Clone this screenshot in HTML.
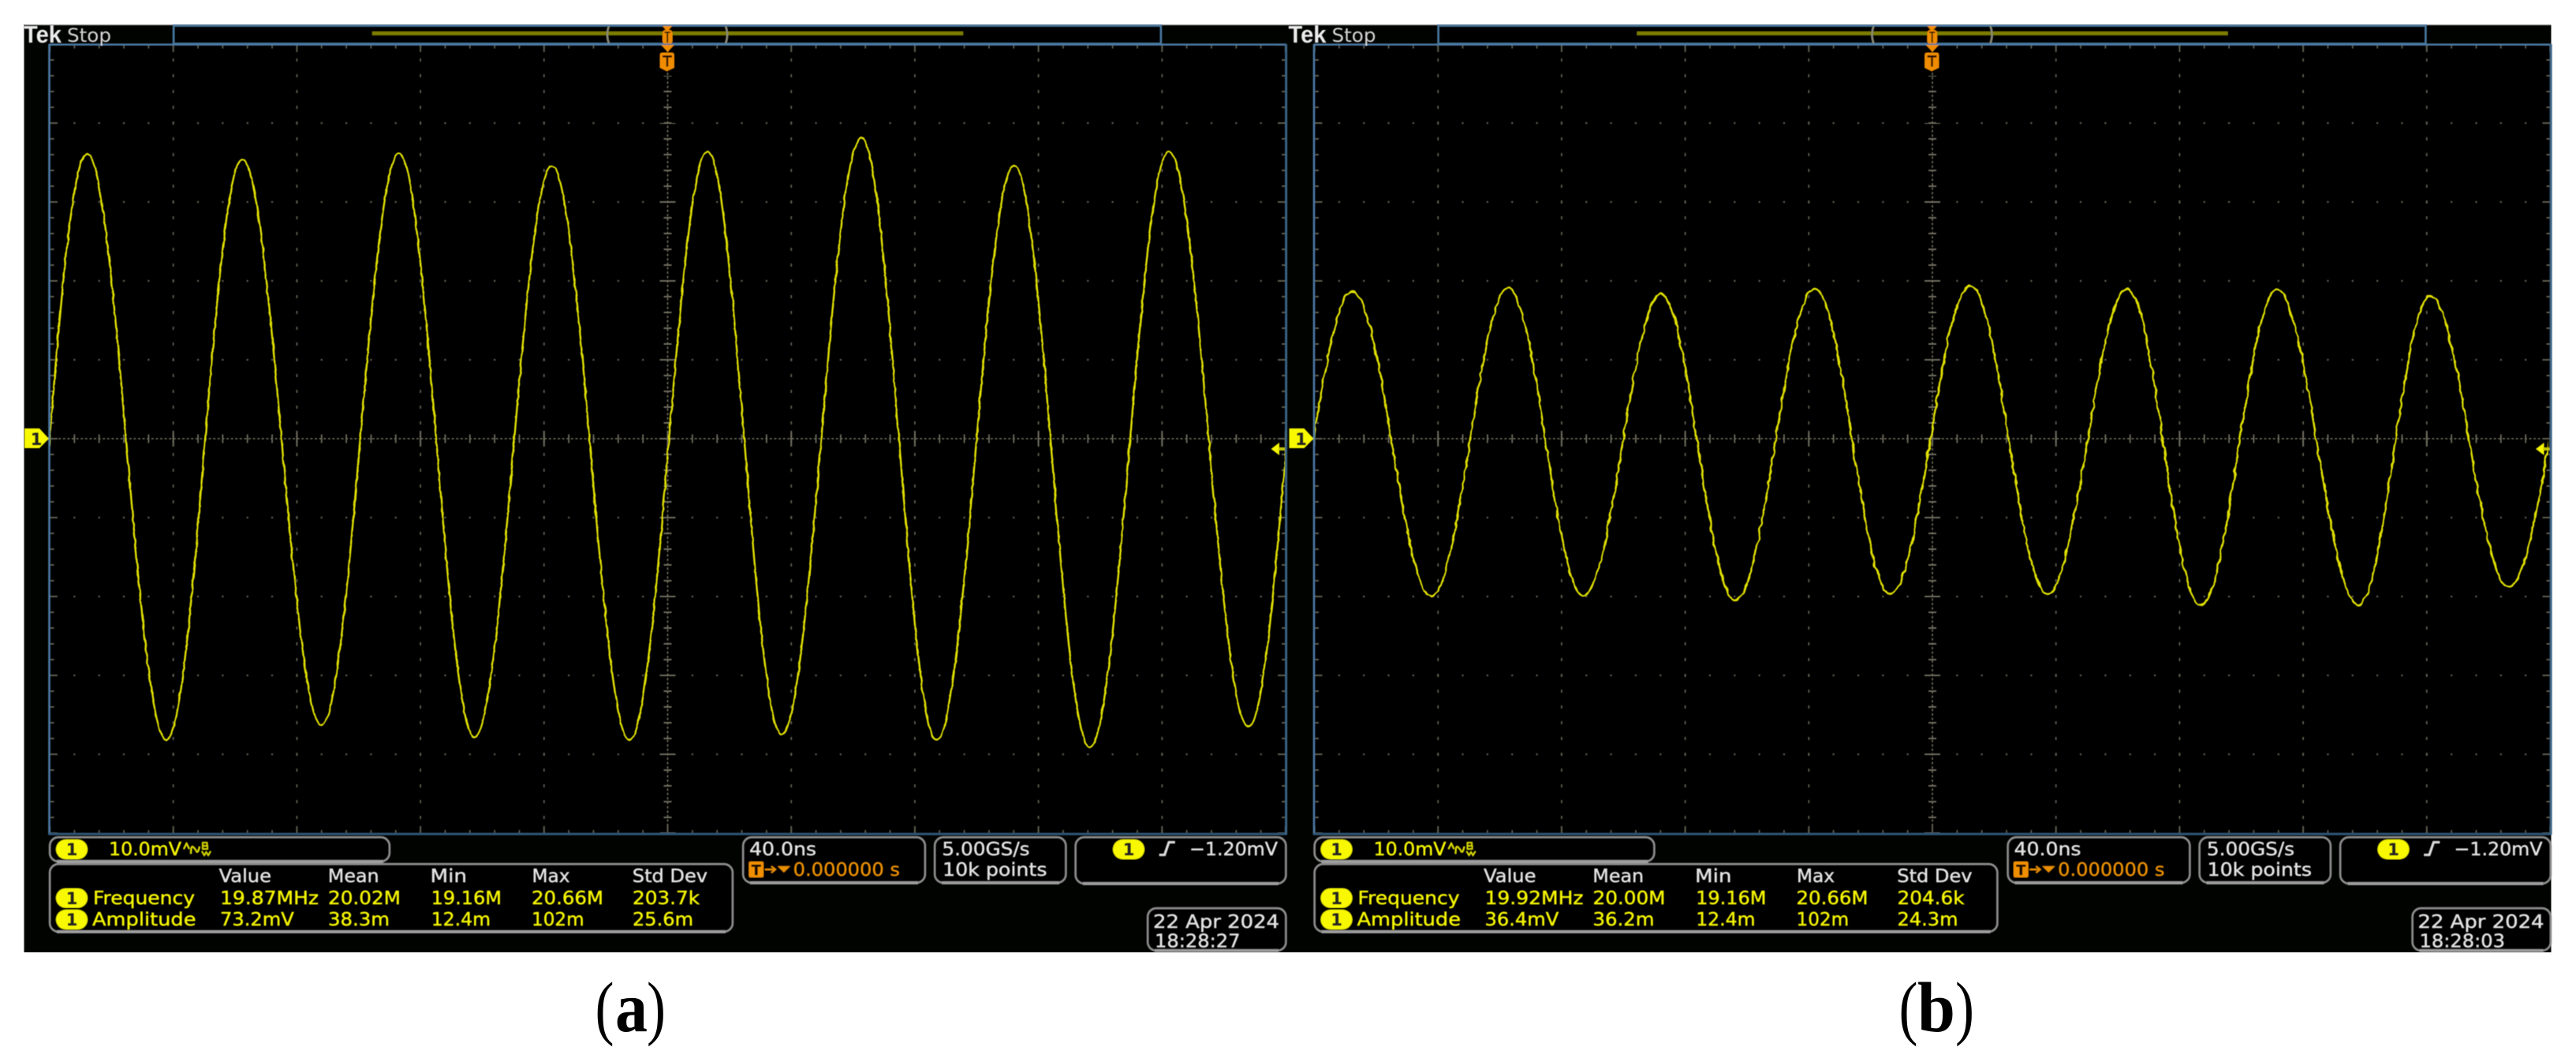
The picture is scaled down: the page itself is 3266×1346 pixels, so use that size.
<!DOCTYPE html>
<html lang="en"><head><meta charset="utf-8"><title>Oscilloscope captures</title>
<style>
html,body{margin:0;padding:0;background:#fff;width:3266px;height:1346px;overflow:hidden}
svg{display:block}
.t{font-family:"DejaVu Sans","Liberation Sans",sans-serif;font-size:23.5px;stroke-width:.45px}
.y{fill:#f4f400;stroke:#f4f400}.w{fill:#e2e2e2;stroke:#e2e2e2}.o{fill:#e88e00;stroke:#e88e00}
.b{font-family:"DejaVu Sans","Liberation Sans",sans-serif;font-size:21px;font-weight:bold;fill:#222;text-anchor:middle}
.c{font-family:"Liberation Serif",serif;font-size:90px;fill:#000}
</style></head><body>
<svg xmlns="http://www.w3.org/2000/svg" width="3266" height="1346" viewBox="0 0 3266 1346">
<defs>
<filter id="soft" filterUnits="userSpaceOnUse" x="0" y="0" width="3266" height="1346"><feGaussianBlur stdDeviation="0.6"/></filter>
<filter id="n1" filterUnits="userSpaceOnUse" x="0" y="0" width="3266" height="1346" color-interpolation-filters="sRGB">
<feTurbulence type="fractalNoise" baseFrequency="0.09" numOctaves="2" seed="4" result="r"/>
<feDisplacementMap in="SourceGraphic" in2="r" scale="3" xChannelSelector="R" yChannelSelector="G"/>
<feGaussianBlur stdDeviation="0.4"/></filter>
<filter id="n2" filterUnits="userSpaceOnUse" x="0" y="0" width="3266" height="1346" color-interpolation-filters="sRGB">
<feTurbulence type="fractalNoise" baseFrequency="0.09" numOctaves="2" seed="9" result="r"/>
<feDisplacementMap in="SourceGraphic" in2="r" scale="5" xChannelSelector="R" yChannelSelector="G"/>
<feGaussianBlur stdDeviation="0.4"/></filter>
<clipPath id="cl"><rect x="62" y="56" width="1568" height="1002"/></clipPath>
<clipPath id="cr"><rect x="1665" y="56" width="1566" height="1002"/></clipPath>

<g id="grid" fill="none" stroke="#5e5d50" filter="url(#soft)">
<path stroke-width="1.8" stroke-dasharray="4 16" stroke-dashoffset="2" d="M156.7 0V1001M313.4 0V1001M470.1 0V1001M626.8 0V1001M940.2 0V1001M1096.9 0V1001M1253.6 0V1001M1410.3 0V1001"/>
<path stroke-width="2.2" stroke-dasharray="2.2 29.14" stroke-dashoffset="1.1" d="M0 100H1567M0 200H1567M0 300H1567M0 400H1567M0 600H1567M0 700H1567M0 800H1567M0 900H1567"/>
<!-- centre cross -->
<path stroke="#74735f" stroke-width="1.6" stroke-dasharray="3 2.6" d="M0 500H1567M783.5 36V1001"/>
<path stroke="#6e6d5e" stroke-width="11" stroke-dasharray="1.8 29.54" stroke-dashoffset="0.9" d="M0 500H1567"/>
<path stroke="#6e6d5e" stroke-width="20" stroke-dasharray="2 154.7" stroke-dashoffset="1" d="M0 500H1567"/>
<path stroke="#6e6d5e" stroke-width="10" stroke-dasharray="2 18" stroke-dashoffset="1" d="M783.5 40V1001"/>
<path stroke="#6e6d5e" stroke-width="20" stroke-dasharray="2 98" stroke-dashoffset="1" d="M783.5 100V1001"/>
<!-- edge ticks -->
<path stroke-width="5" stroke-dasharray="1.8 29.54" stroke-dashoffset="0.9" d="M0 3H1567M0 998.5H1567"/>
<path stroke-width="10" stroke-dasharray="2 154.7" stroke-dashoffset="1" d="M0 5H1567M0 996H1567"/>
<path stroke-width="5" stroke-dasharray="2 18" stroke-dashoffset="1" d="M3 0V1001M1564.5 0V1001"/>
<path stroke-width="10" stroke-dasharray="2 98" stroke-dashoffset="1" d="M5 0V1001M1562 0V1001"/>
</g>

<g id="chrome">
<!-- top record bar -->
<rect x="220" y="32.5" width="1252" height="23" fill="#010301" stroke="#4c7aa3" stroke-width="2.4"/>
<rect x="472" y="40" width="749" height="4.5" fill="#7d7d00"/>
<path d="M772 33Q768 44 772 55M920 33Q924 44 920 55" fill="none" stroke="#8c8c7c" stroke-width="2.2"/>
<path d="M840 33h12l-6 7z" fill="#f08c00"/>
<rect x="840" y="38" width="12.5" height="18" rx="4" fill="#f08c00"/>
<path d="M842.5 41h7.5M846.2 41v13" stroke="#241400" stroke-width="1.8" fill="none"/>
<!-- plot frame -->
<path d="M62.5 56V1058" stroke="#4b79a6" stroke-width="2.6" fill="none"/>
<path d="M62 56.5H1631" stroke="#4c7aa3" stroke-width="2.6" fill="none"/>
<path d="M62 1057H1631" stroke="#2f5474" stroke-width="3" fill="none"/>
<path d="M1630.6 56V1058" stroke="#3a6284" stroke-width="3" fill="none"/>
<!-- trigger marker -->
<path d="M838 57h17l-8.500 9z" fill="#f08c00"/>
<path d="M836.500 70q0-3.500 3-3.500h12.500q3 0 3 3.500v16l-9.500 4.500-9-4.500z" fill="#f08c00"/>
<path d="M840 71.500h12M846 71.500v13" stroke="#201000" stroke-width="2.400" fill="none"/>
<!-- channel pointer -->
<path d="M31 543H50L62 556 50 568H31Z" fill="#f8f800"/>
<!-- right ground arrow -->
<path d="M1611.500 569l10.500-8v16z" fill="#f4f400"/>
<rect x="1621" y="567" width="8" height="4" fill="#c6c600"/>
<!-- readout boxes -->
<g fill="#010301" stroke="#8f8f8f" stroke-width="2.400">
<rect x="63" y="1061" width="431" height="31" rx="11"/>
<rect x="63" y="1095" width="866" height="86" rx="11"/>
<rect x="942" y="1061" width="231" height="58" rx="11"/>
<rect x="1185" y="1061" width="166.500" height="58" rx="11"/>
<rect x="1363.500" y="1061" width="267" height="59" rx="11"/>
<rect x="1455" y="1151" width="175.500" height="54" rx="11"/>
</g>
<path d="M72 1092H486M72 1181H920M951 1119H1164M1194 1119H1343M1373 1120H1621M1464 1205H1621" stroke="#a0a0a0" stroke-width="3.800" fill="none"/>
<g fill="#f8f800">
<rect x="71" y="1064" width="40" height="25" rx="12.500"/>
<rect x="71" y="1126" width="40" height="24.500" rx="12.200"/>
<rect x="71" y="1153" width="40" height="25" rx="12.500"/>
<rect x="1411" y="1064" width="40" height="25" rx="12.500"/>
</g>
<rect x="949.500" y="1092" width="18.500" height="20" rx="2" fill="#f09000"/>
<path d="M970 1102h12M978 1098l5 4-5 4" stroke="#e88e00" stroke-width="2" fill="none"/>
<path d="M985.700 1097.700h16.300l-8.200 8z" fill="#e88e00"/>
<path d="M1470 1083.500h6.500l5.500-16h7.500" fill="none" stroke="#e4e4e4" stroke-width="2.500"/>
<path d="M233 1076l3.500-7 3.500 7M242 1082q0-12 3.500-8t3.500 5q2 3 4-6" fill="none" stroke="#e6e600" stroke-width="1.700"/>
<path d="M257 1068h5.500v4h-5.500zM257 1072h6v4h-6zM256 1079l3 5 2.500-4 2.500 4 3-5" fill="none" stroke="#e6e600" stroke-width="1.500"/>
</g>
</defs>

<!-- panel -->
<rect x="30" y="31" width="3204.500" height="1176" fill="#010301"/>
<rect x="30" y="31" width="3204.500" height="1.300" fill="#8c8c8c"/>
<rect x="30" y="31" width="1.200" height="1176" fill="#6c6c6c"/>
<rect x="63" y="57" width="1567" height="1000" fill="#000"/>
<rect x="1666.500" y="57" width="1567" height="1000" fill="#000"/>

<!-- graticules -->
<use href="#grid" transform="translate(63 56)"/>
<use href="#grid" transform="translate(1666.500 56)"/>

<!-- waveforms -->
<g clip-path="url(#cl)"><path filter="url(#n1)" fill="none" stroke="#e2e200" stroke-width="2.400" stroke-linejoin="bevel" d="M62 566C77.600 376 92.600 195 110.400 195C147 195 174.400 938 211 938C246 938 272 202 307 202C343.600 202 371 919 407.600 919C443.400 919 470 195 505.800 195C540.700 195 566.700 934.500 601.600 934.500C637.400 934.500 664 211 699.800 211C735.600 211 762.200 938 798 938C834 938 861 192 897 192C931.200 192 956.800 931 991 931C1027.800 931 1055.200 175 1092 175C1126.800 175 1152.800 938 1187.600 938C1223.400 938 1250 210 1285.800 210C1320.700 210 1346.700 947 1381.600 947C1418.200 947 1445.400 192 1482 192C1518.800 192 1546.200 921 1583 921C1619 921 1644 190 1680 190"/></g>
<g clip-path="url(#cr)"><path filter="url(#n2)" fill="none" stroke="#e2e200" stroke-width="2.400" stroke-linejoin="bevel" d="M1665 556C1681 461 1696.500 370 1714.400 370C1751 370 1778.400 755 1815 755C1850.300 755 1876.700 365 1912 365C1946.800 365 1972.800 755 2007.600 755C2043.400 755 2070 373 2105.800 373C2140.100 373 2165.700 760 2200 760C2236.700 760 2264.100 366 2300.800 366C2335.700 366 2361.600 753 2396.500 753C2433.500 753 2461 362 2498 362C2533.700 362 2560.300 752 2596 752C2632.800 752 2660.200 366 2697 366C2730.900 366 2756.100 767 2790 767C2825.300 767 2851.700 367 2887 367C2924.500 367 2952.500 767 2990 767C3023.100 767 3047.900 375 3081 375C3117.200 375 3144.300 743 3180.500 743C3218.500 743 3247 370 3285 370"/></g>

<!-- chrome -->
<use href="#chrome" filter="url(#soft)"/>
<use href="#chrome" transform="translate(1603.500 0)" filter="url(#soft)"/>

<!-- left readouts -->
<g filter="url(#soft)">
<text x="30" y="54" font-family="Liberation Sans,sans-serif" font-size="31" font-weight="bold" fill="#ececec" textLength="48" lengthAdjust="spacingAndGlyphs">Tek</text>
<text x="85" y="53" font-family="DejaVu Sans,sans-serif" font-size="24" fill="#d4d4d4" textLength="56" lengthAdjust="spacingAndGlyphs">Stop</text>
<text x="46" y="564" class="b">1</text>
<text x="91" y="1084" class="b">1</text><text x="91" y="1146" class="b">1</text><text x="91" y="1173" class="b">1</text><text x="1431" y="1084" class="b">1</text>
<text x="958.800" y="1109" font-family="DejaVu Sans,sans-serif" font-size="18" font-weight="bold" fill="#1c1000" text-anchor="middle">T</text>
<text class="t y" x="138" y="1084" textLength="92" lengthAdjust="spacingAndGlyphs">10.0mV</text>
<text class="t w" x="277.600" y="1118" textLength="66.400" lengthAdjust="spacingAndGlyphs">Value</text>
<text class="t w" x="415.800" y="1118" textLength="64.800" lengthAdjust="spacingAndGlyphs">Mean</text>
<text class="t w" x="545.500" y="1118" textLength="46.500" lengthAdjust="spacingAndGlyphs">Min</text>
<text class="t w" x="674.500" y="1118" textLength="48" lengthAdjust="spacingAndGlyphs">Max</text>
<text class="t w" x="801.800" y="1118" textLength="95.200" lengthAdjust="spacingAndGlyphs">Std Dev</text>
<text class="t y" x="118" y="1146" textLength="129" lengthAdjust="spacingAndGlyphs">Frequency</text>
<text class="t y" x="279" y="1146" textLength="125" lengthAdjust="spacingAndGlyphs">19.87MHz</text>
<text class="t y" x="416" y="1146" textLength="92" lengthAdjust="spacingAndGlyphs">20.02M</text>
<text class="t y" x="546.700" y="1146" textLength="89.300" lengthAdjust="spacingAndGlyphs">19.16M</text>
<text class="t y" x="674" y="1146" textLength="91" lengthAdjust="spacingAndGlyphs">20.66M</text>
<text class="t y" x="802" y="1146" textLength="85" lengthAdjust="spacingAndGlyphs">203.7k</text>
<text class="t y" x="117" y="1173" textLength="131.500" lengthAdjust="spacingAndGlyphs">Amplitude</text>
<text class="t y" x="279" y="1173" textLength="93.700" lengthAdjust="spacingAndGlyphs">73.2mV</text>
<text class="t y" x="416" y="1173" textLength="78" lengthAdjust="spacingAndGlyphs">38.3m</text>
<text class="t y" x="546.700" y="1173" textLength="75.300" lengthAdjust="spacingAndGlyphs">12.4m</text>
<text class="t y" x="674" y="1173" textLength="66.600" lengthAdjust="spacingAndGlyphs">102m</text>
<text class="t y" x="802" y="1173" textLength="77" lengthAdjust="spacingAndGlyphs">25.6m</text>
<text class="t w" x="950" y="1084" textLength="85" lengthAdjust="spacingAndGlyphs">40.0ns</text>
<text class="t o" x="1005.600" y="1110" textLength="135.400" lengthAdjust="spacingAndGlyphs">0.000000 s</text>
<text class="t w" x="1194.400" y="1084" textLength="111.200" lengthAdjust="spacingAndGlyphs">5.00GS/s</text>
<text class="t w" x="1195" y="1110" textLength="132.500" lengthAdjust="spacingAndGlyphs">10k points</text>
<text class="t w" x="1508" y="1084" textLength="112" lengthAdjust="spacingAndGlyphs">−1.20mV</text>
<text class="t w" x="1462" y="1176" textLength="160" lengthAdjust="spacingAndGlyphs">22 Apr 2024</text>
<text class="t w" x="1464" y="1200.500" textLength="108.500" lengthAdjust="spacingAndGlyphs">18:28:27</text>
</g>

<!-- right readouts -->
<g filter="url(#soft)"><g transform="translate(1603.500 0)">
<text x="30" y="54" font-family="Liberation Sans,sans-serif" font-size="31" font-weight="bold" fill="#ececec" textLength="48" lengthAdjust="spacingAndGlyphs">Tek</text>
<text x="85" y="53" font-family="DejaVu Sans,sans-serif" font-size="24" fill="#d4d4d4" textLength="56" lengthAdjust="spacingAndGlyphs">Stop</text>
<text x="46" y="564" class="b">1</text>
<text x="91" y="1084" class="b">1</text><text x="91" y="1146" class="b">1</text><text x="91" y="1173" class="b">1</text><text x="1431" y="1084" class="b">1</text>
<text x="958.800" y="1109" font-family="DejaVu Sans,sans-serif" font-size="18" font-weight="bold" fill="#1c1000" text-anchor="middle">T</text>
<text class="t y" x="138" y="1084" textLength="92" lengthAdjust="spacingAndGlyphs">10.0mV</text>
<text class="t w" x="277.600" y="1118" textLength="66.400" lengthAdjust="spacingAndGlyphs">Value</text>
<text class="t w" x="415.800" y="1118" textLength="64.800" lengthAdjust="spacingAndGlyphs">Mean</text>
<text class="t w" x="545.500" y="1118" textLength="46.500" lengthAdjust="spacingAndGlyphs">Min</text>
<text class="t w" x="674.500" y="1118" textLength="48" lengthAdjust="spacingAndGlyphs">Max</text>
<text class="t w" x="801.800" y="1118" textLength="95.200" lengthAdjust="spacingAndGlyphs">Std Dev</text>
<text class="t y" x="118" y="1146" textLength="129" lengthAdjust="spacingAndGlyphs">Frequency</text>
<text class="t y" x="279" y="1146" textLength="125" lengthAdjust="spacingAndGlyphs">19.92MHz</text>
<text class="t y" x="416" y="1146" textLength="92" lengthAdjust="spacingAndGlyphs">20.00M</text>
<text class="t y" x="546.700" y="1146" textLength="89.300" lengthAdjust="spacingAndGlyphs">19.16M</text>
<text class="t y" x="674" y="1146" textLength="91" lengthAdjust="spacingAndGlyphs">20.66M</text>
<text class="t y" x="802" y="1146" textLength="85" lengthAdjust="spacingAndGlyphs">204.6k</text>
<text class="t y" x="117" y="1173" textLength="131.500" lengthAdjust="spacingAndGlyphs">Amplitude</text>
<text class="t y" x="279" y="1173" textLength="93.700" lengthAdjust="spacingAndGlyphs">36.4mV</text>
<text class="t y" x="416" y="1173" textLength="78" lengthAdjust="spacingAndGlyphs">36.2m</text>
<text class="t y" x="546.700" y="1173" textLength="75.300" lengthAdjust="spacingAndGlyphs">12.4m</text>
<text class="t y" x="674" y="1173" textLength="66.600" lengthAdjust="spacingAndGlyphs">102m</text>
<text class="t y" x="802" y="1173" textLength="77" lengthAdjust="spacingAndGlyphs">24.3m</text>
<text class="t w" x="950" y="1084" textLength="85" lengthAdjust="spacingAndGlyphs">40.0ns</text>
<text class="t o" x="1005.600" y="1110" textLength="135.400" lengthAdjust="spacingAndGlyphs">0.000000 s</text>
<text class="t w" x="1194.400" y="1084" textLength="111.200" lengthAdjust="spacingAndGlyphs">5.00GS/s</text>
<text class="t w" x="1195" y="1110" textLength="132.500" lengthAdjust="spacingAndGlyphs">10k points</text>
<text class="t w" x="1508" y="1084" textLength="112" lengthAdjust="spacingAndGlyphs">−1.20mV</text>
<text class="t w" x="1462" y="1176" textLength="160" lengthAdjust="spacingAndGlyphs">22 Apr 2024</text>
<text class="t w" x="1464" y="1200.500" textLength="108.500" lengthAdjust="spacingAndGlyphs">18:28:03</text>
</g></g>

<!-- captions -->
<text class="c" x="754.500" y="1307" textLength="24" lengthAdjust="spacingAndGlyphs">(</text>
<text class="c" x="780" y="1307" font-weight="bold" textLength="41" lengthAdjust="spacingAndGlyphs">a</text>
<text class="c" x="820" y="1307" textLength="24" lengthAdjust="spacingAndGlyphs">)</text>
<text class="c" x="2407.500" y="1307" textLength="24" lengthAdjust="spacingAndGlyphs">(</text>
<text class="c" x="2431" y="1307" font-weight="bold" textLength="48" lengthAdjust="spacingAndGlyphs">b</text>
<text class="c" x="2479" y="1307" textLength="24" lengthAdjust="spacingAndGlyphs">)</text>
</svg>
</body></html>
